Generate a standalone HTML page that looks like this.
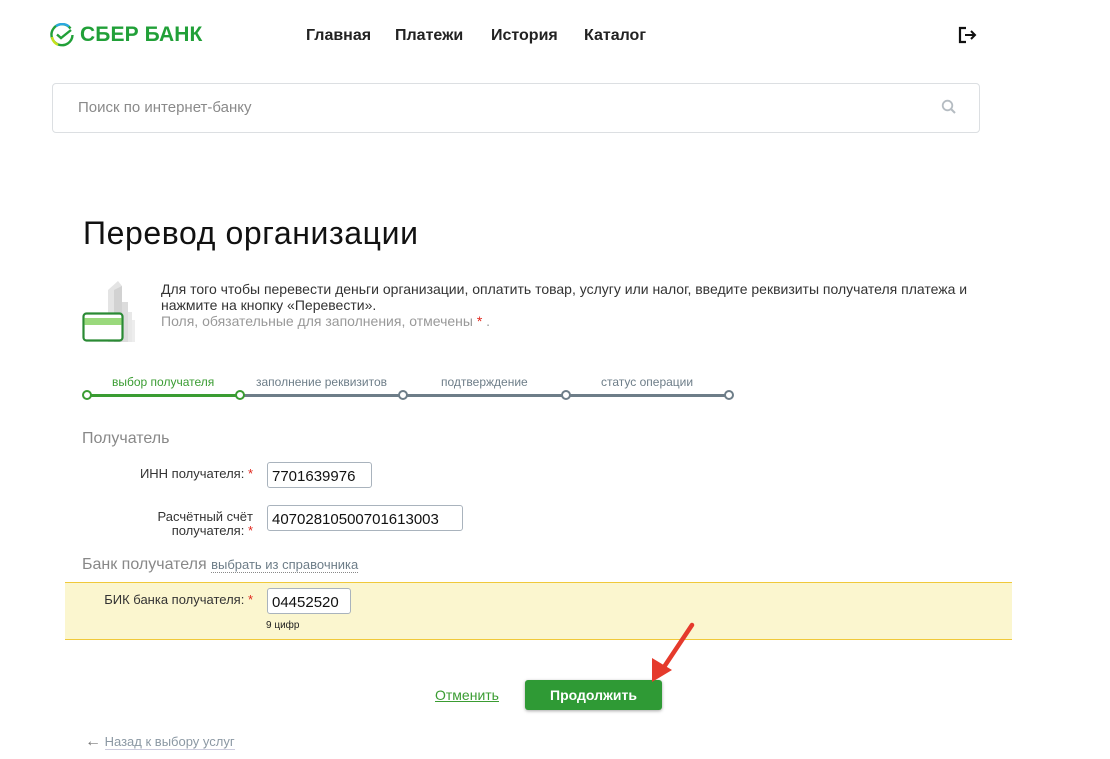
<!DOCTYPE html>
<html><head><meta charset="utf-8"><style>
*{margin:0;padding:0;box-sizing:border-box}
body{width:1110px;height:759px;background:#fff;font-family:"Liberation Sans",Arial,sans-serif;color:#333;position:relative;overflow:hidden}
.a{position:absolute;white-space:nowrap}
.nav{font-weight:bold;font-size:16px;color:#222;top:27px}
.inp{position:absolute;border:1px solid #a9b3bd;border-radius:3px;background:#fff;font-size:15px;padding:5px 0 0 4px;color:#111}
.lbl{position:absolute;font-size:13px;color:#333;text-align:right;right:857px;line-height:14px}
.st{color:#e0261c}
.step{position:absolute;top:375px;font-size:12px;color:#6d7d88}
.dot{position:absolute;top:390px;width:10px;height:10px;border-radius:50%;border:2px solid #6d7d88;background:#fff}
</style></head><body>
<svg class="a" style="left:50px;top:23px" width="24" height="24" viewBox="0 0 24 24"><path d="M20.5 5.5 A10.5 10.5 0 1 0 22.5 12" fill="none" stroke="#21a038" stroke-width="2.4"/><path d="M19 3.5 A10.5 10.5 0 0 0 6 3.2" fill="none" stroke="#2aa7e0" stroke-width="2.4"/><path d="M2 14 A10.5 10.5 0 0 0 8 21.8" fill="none" stroke="#c6e11c" stroke-width="2.4"/><path d="M7 11.5 L11 15 L21 7" fill="none" stroke="#21a038" stroke-width="2.4"/></svg>
<div class="a" style="left:80px;top:23px;font-size:21px;font-weight:bold;color:#21a038;letter-spacing:0.1px">СБЕР БАНК</div>
<div class="a nav" style="left:306px">Главная</div>
<div class="a nav" style="left:395px">Платежи</div>
<div class="a nav" style="left:491px">История</div>
<div class="a nav" style="left:584px">Каталог</div>
<svg class="a" style="left:958px;top:26px" width="20" height="18" viewBox="0 0 20 18"><path d="M8 2H2V16H8" fill="none" stroke="#111" stroke-width="2.2"/><path d="M7 9H17M13 5L17 9L13 13" fill="none" stroke="#111" stroke-width="2"/></svg>
<div class="a" style="left:52px;top:83px;width:928px;height:50px;border:1px solid #dcdfe2;border-radius:4px"></div>
<div class="a" style="left:78px;top:99px;font-size:15px;color:#8a8a8a">Поиск по интернет-банку</div>
<svg class="a" style="left:941px;top:99px" width="16" height="16" viewBox="0 0 16 16"><circle cx="6.5" cy="6.5" r="4.8" fill="none" stroke="#b5bcc2" stroke-width="1.8"/><path d="M10 10L14 14" stroke="#b5bcc2" stroke-width="2"/></svg>
<div class="a" style="left:83px;top:215px;font-size:32px;color:#111;letter-spacing:0.6px">Перевод организации</div>
<svg class="a" style="left:82px;top:280px" width="64" height="64" viewBox="0 0 64 64"><path d="M26 62V10L36 1L40 6V62Z" fill="#e4e4e4"/><path d="M32 62V10L40 6V62Z" fill="#d2d2d2"/><path d="M40 62V22H46V62Z" fill="#dcdcdc"/><path d="M46 62V32H50V62Z" fill="#e8e8e8"/><path d="M50 62V40H53V62Z" fill="#ededed"/><rect x="1.5" y="33.5" width="39" height="27" rx="3" fill="#fff" stroke="#2a8a34" stroke-width="2.2"/><rect x="2.5" y="38" width="37" height="7" fill="#9ad97c"/></svg>
<div class="a" style="left:161px;top:281px;font-size:14px;line-height:16px;color:#333">Для того чтобы перевести деньги организации, оплатить товар, услугу или налог, введите реквизиты получателя платежа и<br>нажмите на кнопку «Перевести».<br><span style="color:#999">Поля, обязательные для заполнения, отмечены <span class="st">*</span> .</span></div>
<div class="a" style="left:87px;top:394px;width:642px;height:3px;background:#6d7d88"></div>
<div class="a" style="left:87px;top:394px;width:153px;height:3px;background:#3a9c32"></div>
<div class="dot" style="left:82px;border-color:#3a9c32"></div>
<div class="dot" style="left:235px;border-color:#3a9c32"></div>
<div class="dot" style="left:398px"></div>
<div class="dot" style="left:561px"></div>
<div class="dot" style="left:724px"></div>
<div class="step" style="left:112px;color:#3a9c32">выбор получателя</div>
<div class="step" style="left:256px">заполнение реквизитов</div>
<div class="step" style="left:441px">подтверждение</div>
<div class="step" style="left:601px">статус операции</div>
<div class="a" style="left:82px;top:430px;font-size:16px;color:#888">Получатель</div>
<div class="lbl" style="top:467px">ИНН получателя: <span class="st">*</span></div>
<div class="inp" style="left:267px;top:462px;width:105px;height:26px">7701639976</div>
<div class="lbl" style="top:510px">Расчётный счёт<br>получателя: <span class="st">*</span></div>
<div class="inp" style="left:267px;top:505px;width:196px;height:26px">40702810500701613003</div>
<div class="a" style="left:82px;top:556px;font-size:16px;color:#888">Банк получателя <span style="font-size:13px;color:#6d7d88;border-bottom:1px dotted #888">выбрать из справочника</span></div>
<div class="a" style="left:65px;top:582px;width:947px;height:58px;background:#fbf6cf;border-top:1px solid #f0c93a;border-bottom:1px solid #f0c93a"></div>
<div class="lbl" style="top:593px">БИК банка получателя: <span class="st">*</span></div>
<div class="inp" style="left:267px;top:588px;width:84px;height:26px">04452520</div>
<div class="a" style="left:266px;top:620px;font-size:10px;color:#222">9 цифр</div>
<div class="a" style="left:435px;top:687px;font-size:14px;color:#3a9c32;text-decoration:underline">Отменить</div>
<div class="a" style="left:525px;top:680px;width:137px;height:30px;background:#2f9a35;border-radius:3px;box-shadow:0 1px 3px rgba(0,0,0,.35);color:#fff;font-weight:bold;font-size:14px;text-align:center;line-height:30px">Продолжить</div>
<svg class="a" style="left:640px;top:620px" width="60" height="70" viewBox="0 0 60 70"><path d="M52 5L22 50" stroke="#e53a2c" stroke-width="4.5" stroke-linecap="round"/><path d="M12 62L12 38L32 50Z" fill="#e53a2c"/></svg>
<div class="a" style="left:85px;top:733px;font-size:13px;color:#8b98a3"><span style="font-size:16px;color:#777">←</span> <span style="border-bottom:1px solid #ccd">Назад к выбору услуг</span></div>
</body></html>
